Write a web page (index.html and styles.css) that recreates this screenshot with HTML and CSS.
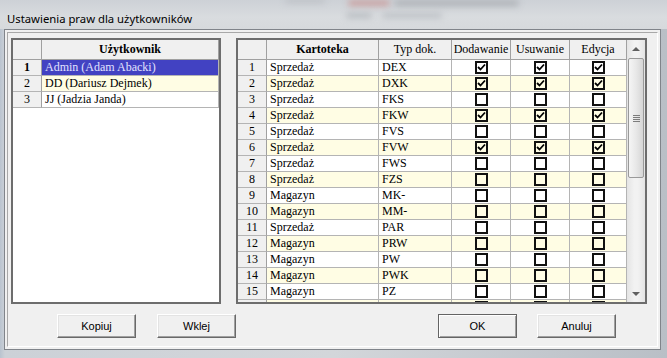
FILE: index.html
```html
<!DOCTYPE html>
<html lang="pl">
<head>
    <meta charset="UTF-8">
    <title>Ustawienia praw dla użytkowników</title>
    <link rel="stylesheet" href="styles.css">
</head>
<body>
<div class="window">
    <div class="titlebar">
        <span class="ghost g1"></span>
        <span class="ghost g2"></span>
        <span class="ghost g3"></span>
        <span class="ghost g4"></span>
        <span class="ghost g5"></span>
        <span class="title">Ustawienia praw dla użytkowników</span>
    </div>
    <div class="frame">
        <div class="client">
            <div class="panels">
                <div class="grid users">
                    <div class="row head">
                        <div class="cell num"></div>
                        <div class="cell bold">Użytkownik</div>
                    </div>
                    <div class="row">
                        <div class="cell num bold">1</div>
                        <div class="cell text selected">Admin (Adam Abacki)</div>
                    </div>
                    <div class="row alt">
                        <div class="cell num">2</div>
                        <div class="cell text">DD (Dariusz Dejmek)</div>
                    </div>
                    <div class="row">
                        <div class="cell num">3</div>
                        <div class="cell text">JJ (Jadzia Janda)</div>
                    </div>
                </div>

                <div class="grid rights">
                    <div class="rights-body">
                        <div class="row head">
                            <div class="cell num"></div>
                            <div class="cell bold">Kartoteka</div>
                            <div class="cell">Typ dok.</div>
                            <div class="cell">Dodawanie</div>
                            <div class="cell">Usuwanie</div>
                            <div class="cell">Edycja</div>
                        </div>
                        <div id="rows"></div>
                    </div>
                    <div class="scrollbar">
                        <div class="sb-btn"><span class="arrow up"></span></div>
                        <div class="thumb"><span class="grip"></span></div>
                        <div class="track"></div>
                        <div class="sb-btn"><span class="arrow down"></span></div>
                    </div>
                </div>
            </div>

            <div class="buttons">
                <div class="btn-group left">
                    <button>Kopiuj</button>
                    <button>Wklej</button>
                </div>
                <div class="btn-group right">
                    <button class="default">OK</button>
                    <button>Anuluj</button>
                </div>
            </div>
        </div>
    </div>
</div>

<script>
    // kartoteka, typ dokumentu, [dodawanie, usuwanie, edycja]
    var rights = [
        ['Sprzedaż', 'DEX', 1],
        ['Sprzedaż', 'DXK', 1],
        ['Sprzedaż', 'FKS', 0],
        ['Sprzedaż', 'FKW', 1],
        ['Sprzedaż', 'FVS', 0],
        ['Sprzedaż', 'FVW', 1],
        ['Sprzedaż', 'FWS', 0],
        ['Sprzedaż', 'FZS', 0],
        ['Magazyn', 'MK-', 0],
        ['Magazyn', 'MM-', 0],
        ['Sprzedaż', 'PAR', 0],
        ['Magazyn', 'PRW', 0],
        ['Magazyn', 'PW', 0],
        ['Magazyn', 'PWK', 0],
        ['Magazyn', 'PZ', 0],
        ['', '', 0] // next row, scrolled out of view
    ];

    var check = '<svg width="9" height="9" viewBox="0 0 9 9"><path d="M1 4 L3.5 6.5 L8 1.5" fill="none" stroke="#000" stroke-width="1.8"/></svg>';
    var html = '';
    rights.forEach(function (r, i) {
        var box = '<div class="cell mid"><span class="cb">' + (r[2] ? check : '') + '</span></div>';
        html += '<div class="row' + (i % 2 ? ' alt' : '') + '">' +
            '<div class="cell num">' + (r[0] ? i + 1 : '') + '</div>' +
            '<div class="cell text">' + r[0] + '</div>' +
            '<div class="cell text">' + r[1] + '</div>' +
            box + box + box +
            '</div>';
    });
    document.getElementById('rows').innerHTML = html;
</script>
</body>
</html>
```

FILE: styles.css
```css
* { box-sizing: border-box; }

body {
    margin: 0;
    background: #c9ced4;
}

.window {
    width: 667px;
    height: 358px;
    position: relative;
    overflow: hidden;
    background: linear-gradient(90deg, #b9c3cf 0, #ccd1d7 5px, #d3d6da 50%, #b9bfc6 100%);
}

/* title bar */
.titlebar {
    height: 29px;
    position: relative;
    padding: 9px 0 0 7px;
    background: linear-gradient(180deg, #cdd1d6 0, #d9dcdf 60%, #d6d9dc 100%);
}
.title {
    position: relative;
    font-family: "Noto Sans", sans-serif;
    font-size: 11.3px;
    color: #000;
}
.ghost {
    position: absolute;
    filter: blur(3px);
    border-radius: 3px;
}
.g1 { left: 348px; top: 0; width: 42px; height: 6px; background: #c9a0a0; }
.g2 { left: 394px; top: 0; width: 125px; height: 6px; background: #adb1b6; }
.g3 { left: 346px; top: 13px; width: 26px; height: 5px; background: #b6babf; }
.g4 { left: 382px; top: 13px; width: 60px; height: 5px; background: #bbbfc4; }
.g5 { left: 285px; top: -2px; width: 40px; height: 5px; background: #bdc1c6; }

/* dialog body */
.frame {
    margin-left: 4px;
    width: 657px;
    height: 321px;
    border: 1px solid #80848a;
    background: #f0f0f0;
    padding: 2px;
}
.client {
    height: 100%;
    border: 1px solid #a8a8a8;
    border-right-color: #fff;
    border-bottom-color: #fff;
    padding: 5px 10px 0 3px;
}

.panels {
    display: flex;
    gap: 15px;
    height: 266px;
}

.grid {
    border: 2px solid #6d6d6d;
    background: #fff;
    font-family: "Liberation Serif", serif;
    font-size: 12px;
    color: #000;
}
.users { width: 210px; }
.rights {
    width: 411px;
    display: flex;
    overflow: hidden;
}
.rights-body {
    width: 389px;
    overflow: hidden;
}

.row {
    display: grid;
    height: 16px;
    background: #fff;
}
.users .row { grid-template-columns: 29px 177px; }
.rights .row { grid-template-columns: 29px 112px 73px 59px 59px 57px; }
.row.alt { background: #fffde4; }
.row.head { height: 20px; background: #f0f0f0; }

.cell {
    border-right: 1px solid #b4b4b4;
    border-bottom: 1px solid #b4b4b4;
    line-height: 15px;
    text-align: center;
    white-space: nowrap;
    overflow: hidden;
}
.head .cell {
    line-height: 19px;
    border-color: #a0a0a0;
}
.cell.num {
    background: #f0f0f0;
    border-right-color: #a0a0a0;
}
.cell.text {
    text-align: left;
    padding-left: 3px;
}
.cell.mid {
    display: flex;
    align-items: center;
    justify-content: center;
}
.bold { font-weight: bold; }
.selected {
    background: #4242c2;
    color: #e2e2ff;
}

.cb {
    width: 13px;
    height: 13px;
    border: 2px solid #111;
    display: flex;
    align-items: center;
    justify-content: center;
}
.cb svg { display: block; }

/* scrollbar */
.scrollbar {
    width: 18px;
    display: flex;
    flex-direction: column;
    background: linear-gradient(90deg, #e4e4e4 0, #f2f2f2 40%, #f2f2f2 60%, #e4e4e4 100%);
}
.sb-btn {
    height: 17px;
    display: flex;
    align-items: center;
    justify-content: center;
}
.arrow {
    width: 0;
    height: 0;
    border-left: 4px solid transparent;
    border-right: 4px solid transparent;
}
.arrow.up { border-bottom: 4px solid #606060; }
.arrow.down { border-top: 4px solid #606060; }
.thumb {
    margin: 1px 1px 0;
    height: 120px;
    border: 1px solid #9a9a9a;
    border-radius: 2px;
    background: linear-gradient(90deg, #f5f5f5 0, #e8e8e8 50%, #d6d6d6 100%);
    display: flex;
    align-items: center;
    justify-content: center;
}
.grip {
    width: 7px;
    height: 7px;
    background: repeating-linear-gradient(180deg, #7c7c7c 0, #7c7c7c 1px, transparent 1px, transparent 2px);
}
.track { flex: 1; }

/* buttons */
.buttons {
    display: flex;
    justify-content: space-between;
    margin-top: 10px;
    padding: 0 31px 0 46px;
}
.btn-group { display: flex; }
.btn-group.left { gap: 21px; }
.btn-group.right { gap: 20px; }
button {
    width: 79px;
    height: 24px;
    padding: 0;
    font-family: "Liberation Sans", sans-serif;
    font-size: 11px;
    color: #000;
    background: #f0f0f0;
    border: 1px solid;
    border-color: #fff #696969 #696969 #fff;
    box-shadow: inset -1px -1px 0 #a0a0a0, inset 1px 1px 0 #e3e3e3;
}
button.default {
    outline: 1px solid #646464;
    outline-offset: -1px;
    border-color: #646464;
    box-shadow: inset 1px 1px 0 #fff, inset -1px -1px 0 #a0a0a0;
}
```
